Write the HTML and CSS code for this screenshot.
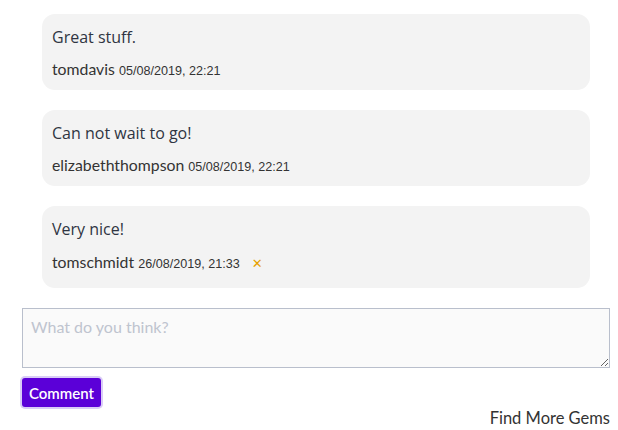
FILE: index.html
```html
<!DOCTYPE html>
<html>
<head>
<meta charset="utf-8">
<link rel="stylesheet" href="styles.css">
</head>
<body>
<div class="page">
  <ul class="comments">
    <li class="card">
      <p class="text">Great stuff.</p>
      <div class="meta"><span class="user">tomdavis</span> <span class="date">05/08/2019, 22:21</span></div>
    </li>
    <li class="card">
      <p class="text">Can not wait to go!</p>
      <div class="meta"><span class="user">elizabeththompson</span> <span class="date">05/08/2019, 22:21</span></div>
    </li>
    <li class="card">
      <p class="text">Very nice!</p>
      <div class="meta"><span class="user">tomschmidt</span> <span class="date">26/08/2019, 21:33</span><button class="del" type="button">&#x2715;</button></div>
    </li>
  </ul>
  <form class="form">
    <textarea class="input" placeholder="What do you think?"></textarea>
    <button class="submit" type="button">Comment</button>
  </form>
  <div class="more"><a href="#">Find More Gems</a></div>
</div>
</body>
</html>
```
FILE: styles.css
```css
html, body { margin: 0; padding: 0; background: #fff; }
body { font-family: "Open Sans", "Lato", sans-serif; color: #2f3542; }
.page { padding: 14px 8px 0 22px; width: 588px; }
.comments { list-style: none; margin: 0 20px; padding: 0; display: flex; flex-direction: column; gap: 20px; }
.card { background: #f3f3f3; border-radius: 13px; padding: 10px 10px 10px; }
.text { margin: 0; font-size: 16px; line-height: 26px; color: #2f3542; }
.meta { margin-top: 8px; line-height: 22px; font-family: "Lato", sans-serif; font-size: 15.8px; color: #333; white-space: nowrap; }
.user { line-height: 1; }
.date { font-family: "Liberation Sans", Arial, sans-serif; font-size: 12.6px; line-height: 1; }
.del { border: 0; background: none; color: #e6a100; font-size: 13px; padding: 0 6px; margin-left: 6px; height: 28px; line-height: 28px; vertical-align: middle; font-family: "DejaVu Sans", sans-serif; }
.form { margin-top: 20px; display: flex; flex-direction: column; align-items: flex-start; gap: 10px; }
.input { box-sizing: border-box; width: 588px; height: 60px; border: 1px solid #b9bfcc; background: #fafafa; padding: 8px 8px; font-family: "Lato", sans-serif; font-size: 16px; resize: vertical; margin: 0; }
.input::placeholder { color: #bfc4cf; }
.submit { background: #5b00d8; color: #fff; border: 0; border-radius: 3px; font-family: "Lato", sans-serif; font-weight: 600; font-size: 15px; height: 29px; padding: 0 7px; box-shadow: 0 0 0 2px #d9ccf6; margin-left: 0; }
.more { text-align: right; margin-top: 0; line-height: 22px; }
.more a { font-family: "Lato", sans-serif; font-size: 16.5px; color: #333; text-decoration: none; }
```
